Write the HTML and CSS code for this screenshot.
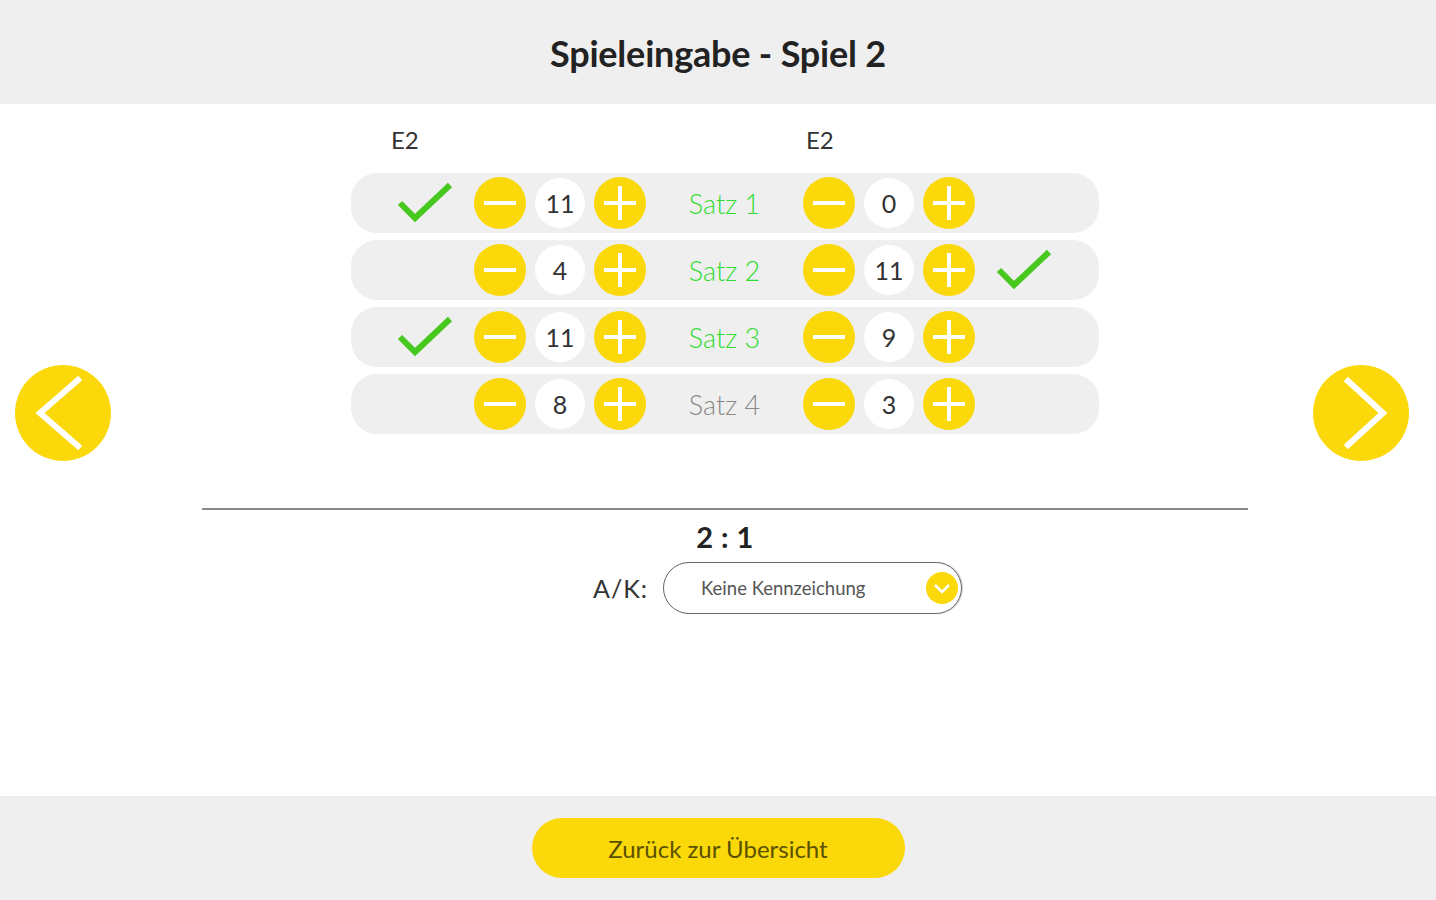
FILE: index.html
```html
<!DOCTYPE html>
<html lang="de">
<head>
<meta charset="utf-8">
<title>Spieleingabe - Spiel 2</title>
<link rel="stylesheet" href="styles.css">
</head>
<body>
<div class="app">
  <header class="topbar">
    <h1 class="title">Spieleingabe - Spiel 2</h1>
  </header>

  <main class="main">
    <button class="nav nav-prev" aria-label="Zurück">
      <svg viewBox="0 0 96 96" width="96" height="96"><circle cx="48" cy="48" r="48" fill="#fbd80a"/><polyline points="63,15 25,48 63,81" fill="none" stroke="#fff" stroke-width="6" stroke-linecap="square"/></svg>
    </button>

    <section class="center">
      <div class="teams">
        <span class="team team-left">E2</span>
        <span class="team">E2</span>
      </div>

      <div class="sets">
        <div class="set">
          <span class="check"><svg viewBox="0 0 56 42" width="56" height="42"><polyline points="3,21 18,36 53,3" fill="none" stroke="#46c81e" stroke-width="6"/></svg></span>
          <div class="counter">
            <span class="btn"><i class="bar h"></i></span>
            <span class="val">11</span>
            <span class="btn"><i class="bar h"></i><i class="bar v"></i></span>
          </div>
          <span class="satz done">Satz 1</span>
          <div class="counter">
            <span class="btn"><i class="bar h"></i></span>
            <span class="val">0</span>
            <span class="btn"><i class="bar h"></i><i class="bar v"></i></span>
          </div>
          <span class="check"></span>
        </div>

        <div class="set">
          <span class="check"></span>
          <div class="counter">
            <span class="btn"><i class="bar h"></i></span>
            <span class="val">4</span>
            <span class="btn"><i class="bar h"></i><i class="bar v"></i></span>
          </div>
          <span class="satz done">Satz 2</span>
          <div class="counter">
            <span class="btn"><i class="bar h"></i></span>
            <span class="val">11</span>
            <span class="btn"><i class="bar h"></i><i class="bar v"></i></span>
          </div>
          <span class="check"><svg viewBox="0 0 56 42" width="56" height="42"><polyline points="3,21 18,36 53,3" fill="none" stroke="#46c81e" stroke-width="6"/></svg></span>
        </div>

        <div class="set">
          <span class="check"><svg viewBox="0 0 56 42" width="56" height="42"><polyline points="3,21 18,36 53,3" fill="none" stroke="#46c81e" stroke-width="6"/></svg></span>
          <div class="counter">
            <span class="btn"><i class="bar h"></i></span>
            <span class="val">11</span>
            <span class="btn"><i class="bar h"></i><i class="bar v"></i></span>
          </div>
          <span class="satz done">Satz 3</span>
          <div class="counter">
            <span class="btn"><i class="bar h"></i></span>
            <span class="val">9</span>
            <span class="btn"><i class="bar h"></i><i class="bar v"></i></span>
          </div>
          <span class="check"></span>
        </div>

        <div class="set">
          <span class="check"></span>
          <div class="counter">
            <span class="btn"><i class="bar h"></i></span>
            <span class="val">8</span>
            <span class="btn"><i class="bar h"></i><i class="bar v"></i></span>
          </div>
          <span class="satz">Satz 4</span>
          <div class="counter">
            <span class="btn"><i class="bar h"></i></span>
            <span class="val">3</span>
            <span class="btn"><i class="bar h"></i><i class="bar v"></i></span>
          </div>
          <span class="check"></span>
        </div>
      </div>

      <hr class="divider">

      <div class="score">2 : 1</div>

      <div class="ak">
        <span class="ak-label">A/K:</span>
        <div class="select">
          <span class="select-text">Keine Kennzeichung</span>
          <span class="select-arrow"><svg viewBox="0 0 32 32" width="32" height="32"><circle cx="16" cy="16" r="16" fill="#fbd80a"/><polyline points="9,13 16,20 23,13" fill="none" stroke="#fff" stroke-width="2.5"/></svg></span>
        </div>
      </div>
    </section>

    <button class="nav nav-next" aria-label="Weiter">
      <svg viewBox="0 0 96 96" width="96" height="96"><circle cx="48" cy="48" r="48" fill="#fbd80a"/><polyline points="35,16 70,48 35,80" fill="none" stroke="#fff" stroke-width="6" stroke-linecap="square"/></svg>
    </button>
  </main>

  <footer class="bottombar">
    <button class="back">Zurück zur Übersicht</button>
  </footer>
</div>
</body>
</html>
```

FILE: styles.css
```css
* { box-sizing: border-box; }

html, body {
  margin: 0;
  padding: 0;
  background: #ffffff;
  font-family: Lato, "Open Sans", "Liberation Sans", sans-serif;
  color: #333;
}

.app {
  display: flex;
  flex-direction: column;
  height: 900px;
}

.topbar {
  height: 104px;
  flex: none;
  background: #efefef;
  display: flex;
  align-items: center;
  justify-content: center;
}

.title {
  margin: 0;
  font-size: 36px;
  font-weight: 700;
  color: #222;
  letter-spacing: -0.2px;
  padding-top: 2px;
}

.main {
  flex: 1;
  display: flex;
  align-items: flex-start;
  padding-left: 15px;
  padding-right: 27px;
}

.nav {
  flex: none;
  width: 96px;
  height: 96px;
  margin-top: 261px;
  padding: 0;
  border: 0;
  background: none;
  display: block;
}
.nav svg { display: block; }

.center {
  flex: 1;
  padding-left: 26px;
  padding-top: 20px;
  display: flex;
  flex-direction: column;
  align-items: center;
}

.teams {
  width: 748px;
  height: 32px;
  display: flex;
  padding-left: 40px;
  font-size: 24px;
  line-height: 32px;
  color: #333;
}
.team-left { width: 415px; }

.sets {
  margin-top: 17px;
  width: 748px;
  display: flex;
  flex-direction: column;
  gap: 7px;
}

.set {
  height: 60px;
  background: #efefef;
  border-radius: 26px;
  display: flex;
  align-items: center;
  padding-left: 44px;
}

.check {
  width: 60px;
  height: 42px;
  display: flex;
  align-items: center;
  justify-content: center;
}
.check svg { display: block; }
.set > .check:first-child { margin-right: 19px; }
.set > .check:last-child { margin-left: 19px; }

.counter {
  display: flex;
  align-items: center;
  gap: 9px;
}

.btn {
  position: relative;
  width: 52px;
  height: 52px;
  border-radius: 50%;
  background: #fbd80a;
  display: block;
}
.bar {
  position: absolute;
  background: #fff;
  left: 50%;
  top: 50%;
}
.bar.h {
  width: 32px;
  height: 4px;
  margin-left: -16px;
  margin-top: -2px;
}
.bar.v {
  width: 4px;
  height: 34px;
  margin-left: -2px;
  margin-top: -17px;
}

.val {
  width: 50px;
  height: 50px;
  border-radius: 50%;
  background: #fff;
  display: flex;
  align-items: center;
  justify-content: center;
  font-size: 25px;
  color: #333;
}

.satz {
  width: 157px;
  text-align: center;
  font-size: 27px;
  font-weight: 300;
  color: #888;
}
.satz.done { color: #2fdc2f; }

.divider {
  width: 1046px;
  margin: 74px 0 0 0;
  border: 0;
  height: 2px;
  background: #8a8a8a;
}

.score {
  margin-top: 11px;
  height: 32px;
  line-height: 32px;
  font-size: 29px;
  font-weight: 700;
  color: #222;
  letter-spacing: 0.5px;
}

.ak {
  margin-top: 9px;
  align-self: flex-start;
  margin-left: 456px;
  display: flex;
  align-items: center;
  gap: 15px;
}

.ak-label {
  font-size: 25px;
  color: #333;
  letter-spacing: 1px;
}

.select {
  width: 299px;
  height: 52px;
  border: 1.5px solid #666;
  border-radius: 26px;
  display: flex;
  align-items: center;
  justify-content: space-between;
  padding-left: 37px;
  padding-right: 3px;
  box-shadow: 1px 0 1px rgba(0,0,0,0.2);
}
.select-text {
  font-size: 18.5px;
  color: #555;
}
.select-arrow svg { display: block; }

.bottombar {
  height: 104px;
  flex: none;
  background: #efefef;
  display: flex;
  justify-content: center;
  padding-top: 22px;
}

.back {
  width: 373px;
  height: 60px;
  border: 0;
  border-radius: 30px;
  background: #fbd80a;
  font-family: Lato, "Open Sans", sans-serif;
  font-size: 24px;
  color: #5a5100;
  padding: 0;
}
```
